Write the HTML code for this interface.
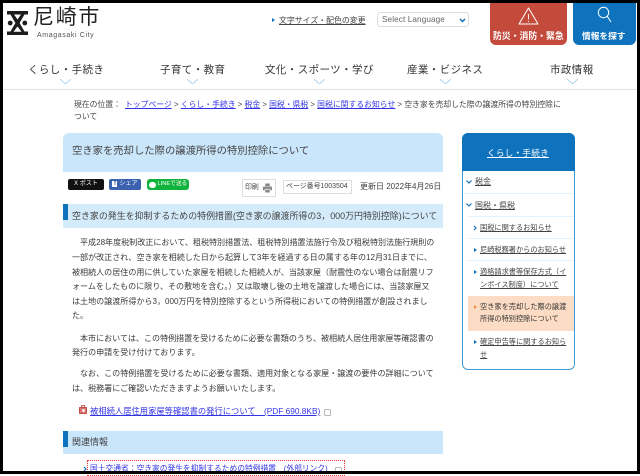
<!DOCTYPE html>
<html lang="ja"><head><meta charset="utf-8"><title>空き家を売却した際の譲渡所得の特別控除について</title>
<style>
html,body{margin:0;padding:0;background:#fff}
body{width:640px;height:474px;overflow:hidden;position:relative;font-family:"Liberation Sans","Noto Sans CJK JP",sans-serif;color:#333}
#w{position:absolute;left:0;top:0;width:640px;height:474px;filter:blur(.3px)}
.a{position:absolute;white-space:nowrap}
a{color:inherit}
.l{color:#3333e6}
.nav{font-size:10.5px;color:#333;line-height:14px;top:62.5px;letter-spacing:.4px}
.cv{position:absolute;top:79px;width:11px;height:5px}
.p{font-size:8.05px;line-height:12px;left:72px;color:#3a3a3a}
.s{font-size:7.2px;line-height:12px;color:#444}
.b{font-size:7.84px}
</style></head><body>
<div id="w">

<!-- logo -->
<svg class="a" style="left:7px;top:11px" width="21" height="24" viewBox="0 0 21 24"><path d="M0 0H21V3.5H17.5L12.6 12L17.5 20.5H21V24H0V20.5H3.5L8.4 12L3.5 3.5H0Z" fill="#1c1c1c"/><path d="M7 3.5H14L10.5 8.5Z" fill="#fff"/><path d="M10.5 15.5L14.5 20.8H6.5Z" fill="#fff"/><circle cx="3.2" cy="12" r="2.4" fill="#1c1c1c"/><circle cx="17.8" cy="12" r="2.4" fill="#1c1c1c"/></svg>
<div class="a" style="left:33px;top:5px;font-size:21px;line-height:26px;letter-spacing:1.7px;color:#222">尼崎市</div>
<div class="a" style="left:37px;top:30.5px;font-size:7px;line-height:9px;letter-spacing:.62px;color:#555">Amagasaki City</div>

<!-- utility -->
<div class="a" style="left:272px;top:18px;width:0;height:0;border-left:3px solid #0f6fbd;border-top:2.5px solid transparent;border-bottom:2.5px solid transparent"></div>
<div class="a" style="left:279px;top:14.5px;font-size:7.9px;line-height:12px;color:#444;text-decoration:underline">文字サイズ・配色の変更</div>
<div class="a" style="left:377px;top:12px;width:92px;height:15px;border:1px solid #ddd;border-radius:3px;background:#fff;box-sizing:border-box"></div>
<div class="a" style="left:382px;top:14px;font-size:8.2px;line-height:12px;color:#666;letter-spacing:.1px">Select Language</div>
<svg class="a" style="left:459px;top:18px" width="7" height="5" viewBox="0 0 7 5"><path d="M1 1L3.5 3.5L6 1" fill="none" stroke="#0f6fbd" stroke-width="1.5"/></svg>

<div class="a" style="left:490px;top:0;width:77px;height:45px;background:#c44a3c;border-radius:0 0 6px 6px"></div>
<svg class="a" style="left:518px;top:7px" width="21" height="18" viewBox="0 0 21 18"><path d="M10.5 1L20 17H1Z" fill="none" stroke="#fff" stroke-width="1" stroke-linejoin="round"/><path d="M10.5 7V12.5M10.5 14V15" stroke="#fff" stroke-width=".9"/></svg>
<div class="a" style="left:493px;top:30px;font-size:8.85px;line-height:12px;color:#fff;font-weight:700">防災・消防・緊急</div>
<div class="a" style="left:573px;top:0;width:63px;height:45px;background:#0f72bd;border-radius:0 0 6px 6px"></div>
<svg class="a" style="left:594.5px;top:5px" width="20" height="18" viewBox="0 0 20 18"><circle cx="8.5" cy="7.5" r="5.2" fill="none" stroke="#fff" stroke-width="1"/><path d="M12.2 11.2L16 17" stroke="#fff" stroke-width="1"/></svg>
<div class="a" style="left:582px;top:30px;font-size:8.7px;line-height:12px;color:#fff;font-weight:700">情報を探す</div>

<!-- nav -->
<div class="a nav" style="left:28px">くらし・手続き</div>
<div class="a nav" style="left:160px">子育て・教育</div>
<div class="a nav" style="left:265px">文化・スポーツ・学び</div>
<div class="a nav" style="left:407px">産業・ビジネス</div>
<div class="a nav" style="left:550px">市政情報</div>
<svg class="cv" style="left:60px" viewBox="0 0 11 5"><path d="M0 0L5.5 5L11 0" fill="none" stroke="#a9d6f2"/></svg>
<svg class="cv" style="left:187px" viewBox="0 0 11 5"><path d="M0 0L5.5 5L11 0" fill="none" stroke="#a9d6f2"/></svg>
<svg class="cv" style="left:314px" viewBox="0 0 11 5"><path d="M0 0L5.5 5L11 0" fill="none" stroke="#a9d6f2"/></svg>
<svg class="cv" style="left:440px" viewBox="0 0 11 5"><path d="M0 0L5.5 5L11 0" fill="none" stroke="#a9d6f2"/></svg>
<svg class="cv" style="left:567px" viewBox="0 0 11 5"><path d="M0 0L5.5 5L11 0" fill="none" stroke="#a9d6f2"/></svg>
<div class="a" style="left:3px;top:89px;width:634px;height:1px;background:#e3e3e3"></div>

<!-- breadcrumb -->
<div class="a b" style="left:74px;top:99px;line-height:12px;color:#444">現在の位置：</div>
<div class="a b" style="left:125px;top:99px;line-height:12px;color:#444"><a class="l" style="text-decoration:underline">トップページ</a> &gt; <a class="l" style="text-decoration:underline">くらし・手続き</a> &gt; <a class="l" style="text-decoration:underline">税金</a> &gt; <a class="l" style="text-decoration:underline">国税・県税</a> &gt; <a class="l" style="text-decoration:underline">国税に関するお知らせ</a> &gt; 空き家を売却した際の譲渡所得の特別控除に</div>
<div class="a b" style="left:74px;top:111px;line-height:12px;color:#444">ついて</div>

<!-- title -->
<div class="a" style="left:63px;top:133px;width:380px;height:39px;background:#c9e6fb;border-radius:6px 6px 0 0"></div>
<div class="a" style="left:72px;top:144px;font-size:10.33px;line-height:16px;color:#444">空き家を売却した際の譲渡所得の特別控除について</div>

<!-- share -->
<div class="a" style="left:68px;top:179px;width:36px;height:11px;background:#111;border-radius:2px;color:#fff;font-size:6px;line-height:11px;text-align:center">X ポスト</div>
<div class="a" style="left:109px;top:179px;width:32px;height:11px;background:#3b62ae;border-radius:2px;color:#fff;font-size:6px;line-height:11px;text-align:center"><b style="background:#fff;color:#3b62ae;padding:0 1.5px;margin-right:2px">f</b>シェア</div>
<div class="a" style="left:147px;top:179px;width:42px;height:11px;background:#10b43c;border-radius:3px;color:#fff;font-size:5.7px;line-height:11px;text-indent:10.5px;overflow:hidden">LINEで送る</div>
<div class="a" style="left:148.5px;top:181.5px;width:7.5px;height:6px;background:#fff;border-radius:3px"></div>

<!-- print etc -->
<div class="a" style="left:241.5px;top:179px;width:34.5px;height:17.5px;border:1px solid #ddd;box-sizing:border-box;background:#fff"></div>
<div class="a" style="left:245px;top:182px;font-size:6.9px;line-height:12px;color:#444">印刷</div>
<svg class="a" style="left:263px;top:183px" width="9" height="10" viewBox="0 0 10 10"><path d="M2.5 0H7.5V3H2.5ZM0 3.5H10V7.5H8V6H2V7.5H0ZM2.5 6.8H7.5V10H2.5Z" fill="#888"/></svg>
<div class="a" style="left:283px;top:180px;width:69px;height:14px;border:1px solid #ddd;box-sizing:border-box"></div>
<div class="a" style="left:286px;top:181px;font-size:6.95px;line-height:12px;color:#444">ページ番号1003504</div>
<div class="a" style="left:360px;top:181px;font-size:8px;line-height:12px;color:#444">更新日 2022年4月26日</div>

<!-- h2 -->
<div class="a" style="left:63px;top:204px;width:380px;height:24px;background:#d4ebfb"></div>
<div class="a" style="left:63px;top:204px;width:5px;height:16px;background:#0f72bd"></div>
<div class="a" style="left:72px;top:208.5px;font-size:8.95px;line-height:14px;color:#444">空き家の発生を抑制するための特例措置(空き家の譲渡所得の3，000万円特別控除)について</div>

<!-- paragraphs -->
<div class="a p" style="left:80px;top:237px">平成28年度税制改正において、租税特別措置法、租税特別措置法施行令及び租税特別法施行規則の</div>
<div class="a p" style="top:252px">一部が改正され、空き家を相続した日から起算して3年を経過する日の属する年の12月31日までに、</div>
<div class="a p" style="top:266.5px">被相続人の居住の用に供していた家屋を相続した相続人が、当該家屋（耐震性のない場合は耐震リフ</div>
<div class="a p" style="top:281px">ォームをしたものに限り、その敷地を含む。）又は取壊し後の土地を譲渡した場合には、当該家屋又</div>
<div class="a p" style="top:295.5px">は土地の譲渡所得から3，000万円を特別控除するという所得税においての特例措置が創設されまし</div>
<div class="a p" style="top:309.5px">た。</div>
<div class="a p" style="left:80px;top:333px">本市においては、この特例措置を受けるために必要な書類のうち、被相続人居住用家屋等確認書の</div>
<div class="a p" style="top:347px">発行の申請を受け付けております。</div>
<div class="a p" style="left:80px;top:368px">なお、この特例措置を受けるために必要な書類、適用対象となる家屋・譲渡の要件の詳細について</div>
<div class="a p" style="top:383px">は、税務署にご確認いただきますようお願いいたします。</div>

<!-- pdf -->
<svg class="a" style="left:79px;top:405px" width="8" height="9" viewBox="0 0 8 9"><path d="M.5 2.5H7.5V8.5H.5Z" fill="#d9736f" stroke="#b33" stroke-width=".8"/><path d="M2.5 2.5V.7H5.5V2.5" fill="none" stroke="#b33" stroke-width=".8"/><circle cx="4.5" cy="5.5" r="1.4" fill="#fff"/></svg>
<div class="a" style="left:90px;top:405px;font-size:8.3px;line-height:12px;color:#3333e6;text-decoration:underline">被相続人居住用家屋等確認書の発行について　(PDF 690.8KB)</div>
<div class="a" style="left:324px;top:408.5px;width:5px;height:5px;border:1px solid #bbb;border-radius:1px"></div>

<!-- related -->
<div class="a" style="left:63px;top:431px;width:380px;height:23px;background:#c9e6fb"></div>
<div class="a" style="left:63px;top:431px;width:5px;height:16px;background:#0f72bd"></div>
<div class="a" style="left:72px;top:435px;font-size:9px;line-height:14px;color:#444">関連情報</div>
<div class="a" style="left:87px;top:460px;width:258px;height:16px;border:1px dotted #e33;box-sizing:border-box"></div>
<div class="a" style="left:90px;top:462.5px;font-size:7.75px;line-height:12px;color:#3333e6;text-decoration:underline">国土交通省：空き家の発生を抑制するための特例措置　(外部リンク)</div>
<div class="a" style="left:335px;top:467px;width:5px;height:5px;border:1px solid #bbb;border-radius:1px"></div>
<svg class="a" style="left:83px;top:466px" width="4" height="6" viewBox="0 0 4 6"><path d="M1 1L3 3L1 5" fill="none" stroke="#0f72bd" stroke-width="1.2"/></svg>

<!-- sidebar -->
<div class="a" style="left:461.5px;top:132.5px;width:113px;height:237px;border:1px solid #3f9ad8;border-radius:6px;box-sizing:border-box;background:#fff"></div>
<div class="a" style="left:461.5px;top:132.5px;width:113px;height:38px;background:#0f72bd;border-radius:6px 6px 0 0"></div>
<div class="a" style="left:487px;top:146.5px;font-size:8.6px;line-height:12px;color:#fff;text-decoration:underline;letter-spacing:.25px">くらし・手続き</div>
<svg class="a" style="left:466px;top:180px" width="6" height="4" viewBox="0 0 6 4"><path d="M.5 .5L3 3L5.5 .5" fill="none" stroke="#0f72bd" stroke-width="1.2"/></svg>
<div class="a" style="left:475px;top:176px;font-size:8px;line-height:12px;color:#444;text-decoration:underline">税金</div>
<div class="a" style="left:463px;top:193px;width:111px;height:1px;background:#e4f2fb"></div>
<svg class="a" style="left:466px;top:203px" width="6" height="4" viewBox="0 0 6 4"><path d="M.5 .5L3 3L5.5 .5" fill="none" stroke="#0f72bd" stroke-width="1.2"/></svg>
<div class="a" style="left:475px;top:199.5px;font-size:8px;line-height:12px;color:#444;text-decoration:underline">国税・県税</div>
<div class="a" style="left:468px;top:216px;width:106px;height:1px;background:#e4f2fb"></div>
<svg class="a" style="left:473px;top:225px" width="4" height="6" viewBox="0 0 4 6"><path d="M1 1L3 3L1 5" fill="none" stroke="#0f72bd" stroke-width="1.2"/></svg>
<div class="a s" style="left:480px;top:222px;text-decoration:underline">国税に関するお知らせ</div>
<div class="a" style="left:468px;top:238px;width:106px;height:1px;background:#e4f2fb"></div>
<div class="a" style="left:474px;top:248px;width:0;height:0;border-left:3px solid #0f72bd;border-top:2px solid transparent;border-bottom:2px solid transparent"></div>
<div class="a s" style="left:480px;top:243.5px;text-decoration:underline">尼崎税務署からのお知らせ</div>
<div class="a" style="left:468px;top:260px;width:106px;height:1px;background:#e4f2fb"></div>
<div class="a" style="left:474px;top:270px;width:0;height:0;border-left:3px solid #0f72bd;border-top:2px solid transparent;border-bottom:2px solid transparent"></div>
<div class="a s" style="left:480px;top:266px;text-decoration:underline">適格請求書等保存方式（イ</div>
<div class="a s" style="left:480px;top:278.5px;text-decoration:underline">ンボイス制度）について</div>
<div class="a" style="left:468px;top:296px;width:105.5px;height:35px;background:#fcdcc4"></div>
<div class="a" style="left:474px;top:305px;width:0;height:0;border-left:3px solid #f08a40;border-top:2px solid transparent;border-bottom:2px solid transparent"></div>
<div class="a s" style="left:480px;top:301px;color:#333">空き家を売却した際の譲渡</div>
<div class="a s" style="left:480px;top:313px;color:#333">所得の特別控除について</div>
<div class="a" style="left:474px;top:340px;width:0;height:0;border-left:3px solid #0f72bd;border-top:2px solid transparent;border-bottom:2px solid transparent"></div>
<div class="a s" style="left:480px;top:336px;text-decoration:underline">確定申告等に関するお知ら</div>
<div class="a s" style="left:480px;top:349px;text-decoration:underline">せ</div>
</div>

<!-- black frame -->
<div class="a" style="left:0;top:0;width:640px;height:3px;background:#000"></div>
<div class="a" style="left:0;top:471px;width:640px;height:3px;background:#000"></div>
<div class="a" style="left:0;top:0;width:3px;height:474px;background:#000"></div>
<div class="a" style="left:637px;top:0;width:3px;height:474px;background:#000"></div>
</body></html>
